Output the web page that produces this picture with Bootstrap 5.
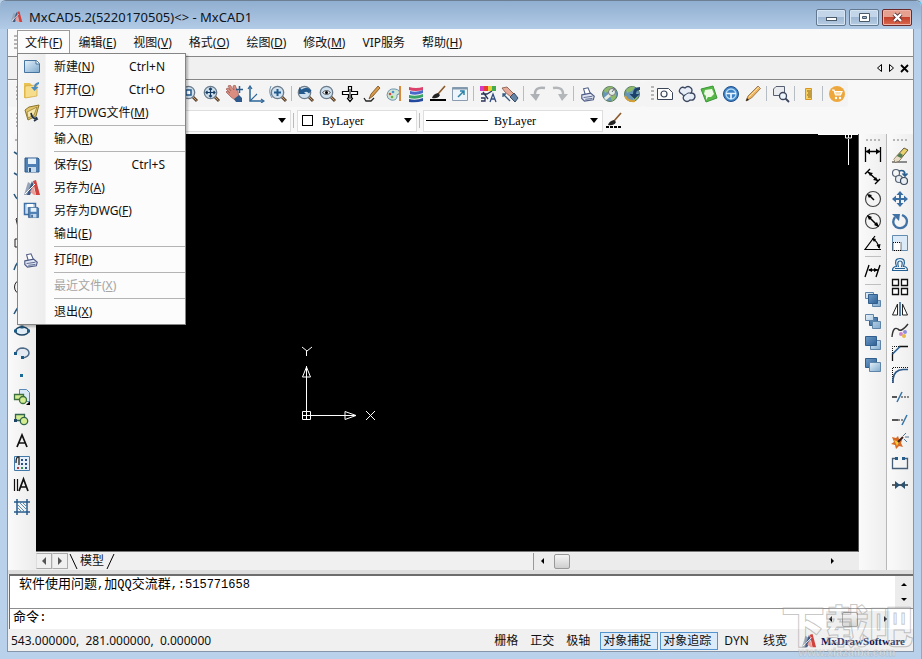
<!DOCTYPE html>
<html lang="zh-CN">
<head>
<meta charset="utf-8">
<meta name="viewport" content="width=device-width, initial-scale=1">
<title>MxCAD5.2</title>
<link href="https://cdn.jsdelivr.net/npm/bootstrap@5.3.0/dist/css/bootstrap.min.css" rel="stylesheet">
<style>
body{font-family:"Noto Sans","Noto Sans CJK SC",sans-serif;font-size:12px;line-height:16px;color:#111;background:#b9d1ea}
svg{display:block;flex:none}
button{color:inherit}
.window-frame{min-height:100vh;padding:0 7px 7px 7px;background:#b9d1ea;border-bottom:1px solid #2fd0ea;border-right:1px solid #4cc5ea;border-top:1px solid #6d7f93;border-radius:6px 6px 0 0}
.title-strip{height:28px;margin:0 -7px;padding:4px 9px 0 10px;background:linear-gradient(#90aed0,#b2cbe6);border-radius:6px 6px 0 0}
.title-text{font-size:13px;color:#0c1420;margin-left:6px}
.win-btns{gap:3px}
.win-btn{width:30px;height:17px;padding:0;border:1px solid #62788f;border-radius:2px;background:linear-gradient(#c3d5e8 45%,#9fb8d3 50%,#b6cce2);box-shadow:inset 0 0 0 1px #d7e4f1}
.win-close{background:linear-gradient(#e5a08f 45%,#c4412c 50%,#d9694f);border-color:#6a2a2a;box-shadow:inset 0 0 0 1px #eeb5a8}
.client-area{background:#f0f0f0;border:1px solid #8696a8;border-top:0}
.menu-strip{height:27px;background:#f9f9f9;padding-left:3px}
.grip-v{width:3px;height:15px;margin:0 4px 0 3px;background:repeating-linear-gradient(#b5b5b5 0 2px,transparent 2px 4px)}
.grip-h{width:42px;height:2px;margin:5px auto 3px;background:repeating-linear-gradient(90deg,#b5b5b5 0 2px,transparent 2px 4px)}
.grip-s{width:14px}
.menu-link{display:block;height:25px;padding:4px 9px 4px 8px;border:0;background:transparent;font-size:12px;line-height:16px}
.menu-open{padding:4px 7px;background:#fcfcfc;border:1px solid #9a9a9a;border-bottom:0}
.file-menu{width:169px;min-width:0;padding:1px 0;margin:0;border:1px solid #858585;border-radius:0;font-size:12px;color:#111;background:linear-gradient(90deg,#f7f7f7 0,#ededed 27px,#fcfcfc 28px);box-shadow:2px 2px 2px rgba(0,0,0,.25);top:23px;left:0}
.file-menu .menu-row{display:flex;align-items:center;width:100%;height:23px;padding:0 20px 0 5px;border:0;background:transparent;text-align:left}
.menu-row:disabled{color:#a5a5a5}
.row-icon{width:31px;flex:none}
.menu-rule{height:3px;margin:0 0 0 36px;padding:1px 0;background:#b4b4b4;background-clip:content-box;border:0;opacity:1}
.doc-strip{height:24px;background:#f0f0f0;border-top:1px solid #868686;border-bottom:1px solid #868686;padding-right:2px}
.flat-btn{border:0;background:transparent;padding:0;display:flex;align-items:center;justify-content:center}
.doc-btn{width:13px;height:20px}
.tool-deck{background:#f8f8f8}
.tool-row{height:27px}
.tool-set{height:26px;background:#f4f4f4;border-radius:3px}
.tool-btn{width:22px;height:22px;flex:none}
.tool-rule{width:1px;height:15px;margin:0 3px 0 2px;background:#b5bcc4;flex:none}
.side-rule{height:1px;width:16px;margin:2px auto 3px;background:#c0c0c0}
.under-menu{padding-left:156px}
.combo{height:22px;background:#fff;border:1px solid #dedede;flex:none}
.combo select{appearance:none;border:0;height:20px;width:100%;min-width:0;padding:0 6px 0 9px;font:12px/20px "Liberation Serif","Noto Sans CJK SC",serif;color:#000;background:transparent;outline:0}
.combo-line select{padding-left:6px}
.combo-arrow{width:0;border:4px solid transparent;border-top:5px solid #000;border-bottom:0;margin-right:4px;flex:none}
.combo-layer{width:268px}.combo-color{width:120px}.combo-line{width:180px}
.swatch{width:11px;height:11px;border:1px solid #000;margin-left:4px;flex:none}
.line-sample{width:62px;height:1px;background:#000;margin-left:2px;flex:none}
.work-area{flex:1 1 auto;min-height:436px}
.side-col{width:28px;background:linear-gradient(90deg,#fafafa,#ececec)}
.side-right{width:27px;background:linear-gradient(90deg,#fafafa,#eee)}
.side-right + .side-right{border-left:1px solid #b8b8b8}
.draw-canvas{background:#000;border-right:1px solid #555;border-bottom:1px solid #777}
.ucs-mark{position:absolute;left:264px;top:208px}
.cursor-mark{position:absolute;right:0;top:0}
.sheet-strip{height:18px;background:#f0f0f0}
.sheet-btn{width:16px;height:16px;border:1px solid #ababab;border-left-color:#ddd}
.sheet-room{flex:11 1 0}
.scroll-h{height:17px;background:#ececec}
.sheet-scroll{flex:8 1 0;border-left:1px solid #999;padding-right:22px}
.thumb{width:16px;height:15px;border:1px solid #999;border-radius:2px;background:linear-gradient(#f5f5f5,#cfcfcf)}
.split-bar{height:4px;background:#dedede}
.command-box{margin-left:1px;background:#fff;border-top:2px solid #6d6d6d;border-left:1px solid #6d6d6d;font:13px/18px "Liberation Mono","Noto Sans CJK SC",monospace;color:#000}
.log-row{height:33px;border-bottom:1px solid #8d8d8d}
.mono-small{font-size:12px}
.log-text{padding:0 0 0 9px}
.cmd-row{height:20px}
.cmd-row label{padding:0 0 2px 3px}
.cmd-row input{border:0;outline:0;background:transparent;min-width:0}
.cmd-scroll{margin-right:23px}
.scroll-v{width:18px;background:#ececec}
.status-strip{height:22px;padding:2px 0 0 3px}
.mode-btn{border:1px solid transparent;background:transparent;padding:0 5px;height:18px;line-height:14px;font-size:12px;flex:none}
.mode-on{border-color:#5595cf;background:#dcebf9;padding:0 6px 0 2px;margin-right:2px}
.mode-dyn{padding:0 3px}
.brand{font:bold 11px/16px "Liberation Serif",serif;color:#101850}
.site-stamp{position:absolute;right:9px;bottom:3px;width:132px;text-align:center;pointer-events:none;z-index:5}
.stamp-big{font:900 44px/48px "Noto Sans CJK SC",sans-serif;color:rgba(255,255,255,.2);-webkit-text-stroke:1px rgba(130,130,130,.45)}
.stamp-url{font:bold 11px/8px "Liberation Sans",sans-serif;color:rgba(255,255,255,.5);-webkit-text-stroke:1px rgba(130,130,130,.25)}
</style>
<script src="https://cdn.jsdelivr.net/npm/bootstrap@5.3.0/dist/js/bootstrap.bundle.min.js"></script>
</head>
<body>
<svg width="0" height="0" class="position-absolute" aria-hidden="true">
<defs>
<linearGradient id="bl" x1="0" y1="0" x2="1" y2="1"><stop offset="0" stop-color="#e4f1fa"/><stop offset="1" stop-color="#7fa9cd"/></linearGradient>
<linearGradient id="dk" x1="0" y1="0" x2="1" y2="1"><stop offset="0" stop-color="#6d9cc9"/><stop offset="1" stop-color="#2f5f93"/></linearGradient>
<symbol id="lens" viewBox="0 0 18 18"><path d="M11 11l5 5" stroke="#5c4632" stroke-width="3"/><path d="M12 12l3.500 3.500" stroke="#c79a6b" stroke-width="1"/><circle cx="7.500" cy="7.500" r="6.200" fill="#cfe0ee" stroke="#6b7b8b" stroke-width="1.300"/></symbol>
<symbol id="mlogo" viewBox="0 0 18 18"><path d="M1 16L5 3l3 2-3 11z" fill="#98a4b8"/><path d="M4 16L9 2l2 5-4 9z" fill="#3d5a85"/><path d="M10 2l3-1 4 15h-4z" fill="#d0423e"/><path d="M7 13l3-6 3 9h-2z" fill="#e9a09a"/><path d="M2 15L12 5" stroke="#fff" stroke-width="1"/></symbol>
<symbol id="disk" viewBox="0 0 18 18"><path d="M2 2h13l1 1v13H2z" fill="#4f80b5" stroke="#2f5b8c"/><path d="M5 2.500h8V8H5z" fill="#e6f1fa"/><path d="M5 11h8v5H5z" fill="#c5d9ea"/><path d="M6 12h2v4H6z" fill="#28517f"/></symbol>
<symbol id="printer" viewBox="0 0 18 18"><path d="M4 3l5-1 3 7-6 1z" fill="#fff" stroke="#4f5d86" stroke-width="1.200"/><path d="M2 10l10-2 4 3.500-1 4-10 1.500-3-3z" fill="#dfe4f2" stroke="#4f5d86" stroke-width="1.300"/><path d="M4 13l10-1.500M6 15l8-1" stroke="#4f5d86"/></symbol>
<symbol id="brush" viewBox="0 0 18 18"><path d="M9 9l7-8" stroke="#8b5a2b" stroke-width="1.600"/><path d="M3 13q1-4 6-5l2 2q-2 4-8 3z" fill="#222"/></symbol>
<symbol id="pencil" viewBox="0 0 18 18"><path d="M2 16l2-5L14 1l2.500 2.500-9 9.500z" fill="#edb45f" stroke="#8d6840" stroke-width=".8"/><path d="M2 16l1-3 2 2z" fill="#222"/><path d="M5 12l10-10" stroke="#fbe0a8"/></symbol>
<symbol id="globe" viewBox="0 0 18 18"><circle cx="9" cy="9" r="7.500" fill="#6797b8" stroke="#5b7a60"/><path d="M3 5q5-5 9-3l-3 4-5 2zM9 11l6-3q1 5-4 8z" fill="#8fba68"/></symbol>
</defs>
</svg>

<div class="window-frame d-flex flex-column">
<header class="title-strip d-flex align-items-center">
<svg width="13" height="14"><use href="#mlogo"/></svg>
<span class="title-text me-auto text-nowrap">MxCAD5.2(5220170505)&lt;&gt; - MxCAD1</span>
<div class="win-btns d-flex">
<button class="win-btn" aria-label="最小化"><svg width="28" height="15"><rect x="9.500" y="7.500" width="10" height="3" fill="#fff" stroke="#4b5a6b"/></svg></button>
<button class="win-btn" aria-label="还原"><svg width="28" height="15"><path d="M9.500 3.500h10v8h-10zM12.500 6.500h4v2h-4z" fill="#fff" fill-rule="evenodd" stroke="#4b5a6b"/></svg></button>
<button class="win-btn win-close" aria-label="关闭"><svg width="28" height="15"><path d="M11 4l7 7M18 4l-7 7" stroke="#5b3030" stroke-width="4"/><path d="M11 4l7 7M18 4l-7 7" stroke="#fff" stroke-width="2.400"/></svg></button>
</div>
</header>

<div class="client-area d-flex flex-column flex-grow-1">
<nav class="menu-strip d-flex align-items-center" aria-label="菜单">
<span class="grip-v me-0"></span>
<ul class="list-unstyled d-flex mb-0 text-nowrap">
<li class="dropdown position-relative"><button class="menu-link menu-open" aria-expanded="true">文件(<u>F</u>)</button>
<div class="dropdown-menu file-menu show">
<button class="menu-row"><span class="row-icon"><svg width="18" height="18"><path d="M1.500 2.500h12l3 3v9h-15z" fill="url(#bl)" stroke="#47749f"/><path d="M13 2.500V6h3.500" fill="#fff" stroke="#47749f"/></svg></span>新建(<u>N</u>)<span class="ms-auto">Ctrl+N</span></button>
<button class="menu-row"><span class="row-icon"><svg width="18" height="18"><path d="M1 2h6l2 2v12l-8 1z" fill="#e9c256"/><path d="M2 5l12-1v11l-12 2z" fill="#f6dd8b" stroke="#d1a43c" stroke-width=".7"/><path d="M16 1q-5 1-5 5H8l3.500 4 4-4H13q0-2 3-3z" fill="#4b8cc4"/></svg></span>打开(<u>O</u>)<span class="ms-auto">Ctrl+O</span></button>
<button class="menu-row"><span class="row-icon"><svg width="18" height="18"><path d="M2 6l4-3 10-2-3 11-8 4z" fill="#e2c56c" stroke="#8c7429"/><path d="M4 8l10-5-3 8-6 3z" fill="#f5e5ab" stroke="#8c7429" stroke-width=".7"/><path d="M8 9q1 6 6 6l-1-2M14 15l-3 2" fill="none" stroke="#233347" stroke-width="1.700"/></svg></span>打开DWG文件(<u>M</u>)</button>
<hr class="menu-rule">
<button class="menu-row"><span class="row-icon"></span>输入(<u>R</u>)</button>
<hr class="menu-rule">
<button class="menu-row"><span class="row-icon"><svg width="18" height="18"><use href="#disk"/></svg></span>保存(<u>S</u>)<span class="ms-auto">Ctrl+S</span></button>
<button class="menu-row"><span class="row-icon"><svg width="18" height="18"><use href="#mlogo"/></svg></span>另存为(<u>A</u>)</button>
<button class="menu-row"><span class="row-icon"><svg width="18" height="18"><path d="M1.500 1.500h11v11h-11z" fill="#c8ddef" stroke="#3e6fa6" stroke-width="1.500"/><path d="M4 2h6v3H4z" fill="#fff"/><use href="#disk" x="4" y="4" width="13" height="13"/></svg></span>另存为DWG(<u>F</u>)</button>
<button class="menu-row"><span class="row-icon"></span>输出(<u>E</u>)</button>
<hr class="menu-rule">
<button class="menu-row"><span class="row-icon"><svg width="16" height="16"><use href="#printer"/></svg></span>打印(<u>P</u>)</button>
<hr class="menu-rule">
<button class="menu-row" disabled><span class="row-icon"></span>最近文件(<u>X</u>)</button>
<hr class="menu-rule">
<button class="menu-row"><span class="row-icon"></span>退出(<u>X</u>)</button>
</div></li>
<li><button class="menu-link">编辑(<u>E</u>)</button></li>
<li><button class="menu-link">视图(<u>V</u>)</button></li>
<li><button class="menu-link">格式(<u>O</u>)</button></li>
<li><button class="menu-link">绘图(<u>D</u>)</button></li>
<li><button class="menu-link">修改(<u>M</u>)</button></li>
<li><button class="menu-link">VIP服务</button></li>
<li><button class="menu-link">帮助(<u>H</u>)</button></li>
</ul>
</nav>

<div class="doc-strip d-flex justify-content-end align-items-center">
<button class="flat-btn doc-btn" aria-label="上一个"><svg width="8" height="10"><path d="M6.500 1.500v7L2.500 5z" fill="none" stroke="#000"/></svg></button>
<button class="flat-btn doc-btn" aria-label="下一个"><svg width="8" height="10"><path d="M1.500 1.500v7L5.500 5z" fill="none" stroke="#000"/></svg></button>
<button class="flat-btn doc-btn" aria-label="关闭文档"><svg width="9" height="9"><path d="M1 1l7 7M8 1L1 8" stroke="#000" stroke-width="1.800"/></svg></button>
</div>

<div class="tool-deck">
<div class="tool-row d-flex align-items-center">
<div class="tool-set d-flex align-items-center ps-1">
<span class="grip-v ms-1"></span><span class="under-menu"></span>
<button class="flat-btn tool-btn" aria-label="窗口缩放"><svg width="18" height="18"><use href="#lens"/><path d="M5 5h5v5H5z" fill="#fff" stroke="#235a8c" stroke-width="1.500"/></svg></button>
<button class="flat-btn tool-btn" aria-label="范围缩放"><svg width="18" height="18"><use href="#lens"/><path d="M7.500 3v9M3 7.500h9M6 4.500l1.500-1.500L9 4.500M6 10.500l1.500 1.500L9 10.500M4.500 6L3 7.500 4.500 9M10.500 6L12 7.500 10.500 9" fill="none" stroke="#163c62" stroke-width="1.200"/></svg></button>
<button class="flat-btn tool-btn" aria-label="平移"><svg width="18" height="18"><path d="M1 4l2-1 3 3-3-5 2-1 4 5-1-4 2-1 3 7 1 5-4 3-4-3-5-5 1-1 3 2z" fill="#d98d80" stroke="#9b5c53" stroke-width=".7"/><path d="M9 14l5-4 3 3v4h-6z" fill="#2d5a8b"/><path d="M14.500 1v7M11 4.500h7" stroke="#2d5a8b" stroke-width="1.500"/></svg></button>
<button class="flat-btn tool-btn" aria-label="坐标系"><svg width="18" height="18"><path d="M3 2v14h13" fill="none" stroke="#2c6596" stroke-width="1.500"/><path d="M3 16l7-7M1 4l2-3 2 3M14 14l3 2-3 2" fill="none" stroke="#2c6596" stroke-width="1.200"/></svg></button>
<button class="flat-btn tool-btn" aria-label="实时缩放"><svg width="18" height="18"><use href="#lens" x="1"/><path d="M8.500 4v7M5 7.500h7" stroke="#235a8c" stroke-width="2"/><path d="M2 1q-3 6 1 12" fill="none" stroke="#6e8fae"/></svg></button>
<span class="tool-rule"></span>
<button class="flat-btn tool-btn" aria-label="缩放上一个"><svg width="18" height="18"><use href="#lens"/><path d="M2 9V2l2.500 2.500q6-4 10 1l-2.500 3q-2-3-5-1L9 9z" fill="#255a8c"/></svg></button>
<button class="flat-btn tool-btn" aria-label="查看"><svg width="18" height="18"><use href="#lens"/><path d="M3.500 7.500q4-4 8 0-4 4-8 0z" fill="#fff" stroke="#555"/><circle cx="7.500" cy="7.500" r="1.500"/></svg></button>
<button class="flat-btn tool-btn" aria-label="夹点"><svg width="18" height="18"><path d="M7.500 1.500h3v5h6v3h-6v3l1 1-2.500 3-2.500-3 1-1v-3h-6v-3h6z" fill="#fff" stroke="#000" stroke-width="1.200"/><path d="M9 4v10" stroke="#000"/></svg></button>
<button class="flat-btn tool-btn" aria-label="画笔"><svg width="18" height="18"><path d="M1 13l2 3h5l3-3" fill="none" stroke="#222" stroke-width="1.300"/><path d="M6 14l2-5 7-8 2 2-7 8z" fill="#d99a48" stroke="#744a1c" stroke-width=".8"/></svg></button>
<button class="flat-btn tool-btn" aria-label="调色板"><svg width="18" height="18"><path d="M2 10q1-7 8-6 6 1 4 5-3 0-2 3-1 4-6 3-4-1-4-5z" fill="#cfe5d5" stroke="#6f95ae"/><circle cx="5" cy="9" r="1.300" fill="#d34a3e"/><circle cx="8" cy="7" r="1.300" fill="#4a91cf"/><circle cx="7" cy="12" r="1.300" fill="#6bac3d"/><path d="M15 1v15" stroke="#d7893c" stroke-width="2"/></svg></button>
<button class="flat-btn tool-btn" aria-label="图层"><svg width="18" height="18"><path d="M2 2q7 2 14 0v3q-8 2-14 0z" fill="#da4069"/><path d="M3 6q6 2 13-1v3q-7 3-13 1z" fill="#4968ca"/><path d="M2 10q7 2 14-1v3q-7 3-14 1z" fill="#38a267"/><path d="M2 14q7 2 14-1v3q-7 2-14 1z" fill="#244a9d"/></svg></button>
<button class="flat-btn tool-btn" aria-label="线宽"><svg width="18" height="18"><use href="#brush"/><path d="M1 15h16" stroke="#000" stroke-width="2"/></svg></button>
<button class="flat-btn tool-btn" aria-label="全屏"><svg width="18" height="18"><path d="M1.500 2.500h15v13h-15z" fill="#edf5fb" stroke="#8a9db0"/><path d="M1.500 3.500h15" stroke="#7f97ad" stroke-width="2"/><path d="M7 12l6-6M9 6h4v4" fill="none" stroke="#2d82a8" stroke-width="1.500"/></svg></button>
<span class="tool-rule"></span>
<button class="flat-btn tool-btn" aria-label="文字样式"><svg width="18" height="18"><path d="M1 1h4v5H1z" fill="#d43ec4"/><path d="M5 1h4v5H5z" fill="#eb3b35"/><path d="M9 1h4v5H9z" fill="#e8cc38"/><path d="M13 1h4v5h-4z" fill="#43ab4f"/><path d="M2 9h6l5-3M4 7l5 7M2 13h4v3H2" fill="none" stroke="#2a3455" stroke-width="1.300"/><path d="M11 17l3-8 3 8M12 14h4" fill="none" stroke="#2f4a80" stroke-width="1.300"/></svg></button>
<button class="flat-btn tool-btn" aria-label="特性匹配"><svg width="18" height="18"><path d="M1 3l5-1 7 7-3 3-6-5z" fill="#e6aa9a" stroke="#805448" stroke-width=".8"/><path d="M9 12l4-4 4 5-3 4z" fill="#6684a5" stroke="#364a63"/><path d="M2 9l7 7M2 12V9h3" fill="none" stroke="#345980" stroke-width="1.300"/></svg></button>
<span class="tool-rule"></span>
<button class="flat-btn tool-btn" aria-label="撤销"><svg width="18" height="18"><path d="M16 3Q5 1 6 11" fill="none" stroke="#aeb1b5" stroke-width="2.500"/><path d="M1 9h10l-4 7z" fill="#aeb1b5"/></svg></button>
<button class="flat-btn tool-btn" aria-label="重做"><svg width="18" height="18"><path d="M2 3q11-2 10 8" fill="none" stroke="#b4b7ba" stroke-width="2.500"/><path d="M7 9h10l-6 7z" fill="#b4b7ba"/></svg></button>
<span class="tool-rule"></span>
<button class="flat-btn tool-btn" aria-label="打印"><svg width="16" height="16"><use href="#printer"/></svg></button>
<button class="flat-btn tool-btn" aria-label="网络查找"><svg width="18" height="18"><use href="#globe"/><path d="M4 14l7-6" stroke="#e8ebe4" stroke-width="3"/><circle cx="11" cy="7" r="3.500" fill="#e4eee8" stroke="#777"/><path d="M11 7l3-4" stroke="#667"/></svg></button>
<button class="flat-btn tool-btn" aria-label="网络更新"><svg width="18" height="18"><use href="#globe"/><path d="M17 2q-7 0-7 7H6.500l5 5 5-5H13q0-4 4-4z" fill="#1d416b"/><path d="M2 11q3 6 10 5" fill="none" stroke="#d6a035" stroke-width="2"/></svg></button>
</div>
<div class="tool-set d-flex align-items-center">
<span class="grip-v ms-2 me-0"></span>
<button class="flat-btn tool-btn" aria-label="区域"><svg width="18" height="18"><path d="M1.500 3.500h11l4 4v7h-15z" fill="#fff" stroke="#3b4658"/><circle cx="8" cy="9" r="3" fill="#fff" stroke="#3b4658" stroke-width="1.200"/></svg></button>
<button class="flat-btn tool-btn" aria-label="云线"><svg width="18" height="18"><path d="M4 9q-4-2-2-5 2-3 5-1 3-3 6 0 2 2 0 5 4 0 4 4-1 4-5 3-3 3-6 0-2-3 1-5-2 1-3-1z" fill="#e8eef7" stroke="#39465e" stroke-width="1.300"/><path d="M7 10q3-3 6-2" fill="none" stroke="#39465e"/></svg></button>
<button class="flat-btn tool-btn" aria-label="面积"><svg width="18" height="18"><path d="M1 4l12-3 4 12-11 4z" fill="#57b847" stroke="#3a9738"/><path d="M5 5l7-1 2 5-3 3H8l-2 3v-4L4 9z" fill="#eefae6"/></svg></button>
<button class="flat-btn tool-btn" aria-label="导航"><svg width="18" height="18"><circle cx="9" cy="9" r="7.500" fill="#3e82c4" stroke="#1f4f8b"/><circle cx="9" cy="9" r="5" fill="none" stroke="#b4dcf8" stroke-width="1.300"/><path d="M4 8.500h10M9 9v5" stroke="#eaf6ff" stroke-width="1.700"/></svg></button>
<button class="flat-btn tool-btn" aria-label="铅笔"><svg width="18" height="18"><use href="#pencil"/></svg></button>
<span class="tool-rule"></span>
<button class="flat-btn tool-btn" aria-label="查找"><svg width="18" height="18"><path d="M4 1.500h8.500v9H1.500V4z" fill="#e9ebef" stroke="#566072"/><circle cx="11" cy="11" r="3.500" fill="#edf5fb" stroke="#39465e" stroke-width="1.300"/><path d="M13.500 13.500l3.500 3.500" stroke="#39465e" stroke-width="1.800"/></svg></button>
<span class="tool-rule"></span>
<button class="flat-btn tool-btn" aria-label="标尺"><svg width="18" height="18"><path d="M5.500 3.500h6v11h-6z" fill="#f7d064" stroke="#d9961f"/><path d="M7 6h4M8 8h3M7 10h4M8 12h3" stroke="#8f6413"/></svg></button>
<span class="tool-rule"></span>
<button class="flat-btn tool-btn" aria-label="购买"><svg width="18" height="18"><circle cx="9" cy="9" r="8" fill="#eda73d"/><path d="M4 5h2l1.500 5h5L14 6.500H7" fill="#f8dda8" stroke="#fff" stroke-width="1.200"/><circle cx="8" cy="13" r="1.200" fill="#fff"/><circle cx="12" cy="13" r="1.200" fill="#fff"/></svg></button>
</div>
</div>
<div class="tool-row d-flex align-items-center ps-1">
<span class="grip-v ms-1"></span>
<div class="combo combo-layer d-flex align-items-center"><select aria-label="图层"></select><span class="combo-arrow"></span></div>
<span class="tool-rule"></span>
<div class="combo combo-color d-flex align-items-center"><span class="swatch"></span><select aria-label="颜色"><option>ByLayer</option></select><span class="combo-arrow"></span></div>
<span class="tool-rule"></span>
<div class="combo combo-line d-flex align-items-center"><span class="line-sample"></span><select aria-label="线型"><option>ByLayer</option></select><span class="combo-arrow"></span></div>
<button class="flat-btn tool-btn" aria-label="线型设置"><svg width="18" height="18"><use href="#brush"/><path d="M1 15h16" stroke="#000" stroke-width="2" stroke-dasharray="3 1"/></svg></button>
</div>
</div>

<main class="work-area d-flex">
<div class="side-col">
<div class="grip-h grip-s"></div>
<div class="d-flex flex-column align-items-center">
<button class="flat-btn tool-btn" aria-label="直线"><svg width="18" height="18"><path d="M1 6l14 9" stroke="#29567b" stroke-width="1.500"/></svg></button>
<button class="flat-btn tool-btn" aria-label="构造线"><svg width="18" height="18"><path d="M1 5l15 9" stroke="#29567b" stroke-width="1.500"/></svg></button>
<button class="flat-btn tool-btn" aria-label="多段线"><svg width="18" height="18"><path d="M1 4q3 8 15 10" fill="none" stroke="#29567b" stroke-width="1.500"/></svg></button>
<button class="flat-btn tool-btn" aria-label="多边形"><svg width="18" height="18"><path d="M9 2l6 5-2 8H5L3 7z" fill="none" stroke="#222"/></svg></button>
<button class="flat-btn tool-btn" aria-label="矩形"><svg width="18" height="18"><path d="M2 5h13v8H2z" fill="none" stroke="#222"/></svg></button>
<button class="flat-btn tool-btn" aria-label="圆弧"><svg width="18" height="18"><path d="M1 14Q4 2 16 4" fill="none" stroke="#29567b" stroke-width="1.500"/></svg></button>
<button class="flat-btn tool-btn" aria-label="圆"><svg width="18" height="18"><circle cx="9" cy="9" r="7.500" fill="none" stroke="#222"/></svg></button>
<button class="flat-btn tool-btn" aria-label="样条"><svg width="18" height="18"><path d="M1 14q7-14 15-8" fill="none" stroke="#29567b" stroke-width="1.500"/></svg></button>
<button class="flat-btn tool-btn" aria-label="椭圆"><svg width="18" height="18"><ellipse cx="9" cy="9" rx="6.500" ry="4" fill="#e0edf7" stroke="#1c4464" stroke-width="1.400"/><path d="M1 7.500h3v3H1zM14 7.500h3v3h-3zM7.500 3.500h3v3h-3z" fill="#1c5b85"/></svg></button>
<button class="flat-btn tool-btn" aria-label="椭圆弧"><svg width="18" height="18"><path d="M3 9q1-5 7-5 6 1 6 5 0 4-7 5" fill="#e5e9f2" stroke="#4d6b89" stroke-width="1.500"/><path d="M1 8h3v3H1zM8 12h3v3H8z" fill="#1c5b85"/></svg></button>
<button class="flat-btn tool-btn" aria-label="点"><svg width="18" height="18"><path d="M7 8h3v3H7z" fill="#1c6b94"/></svg></button>
<button class="flat-btn tool-btn" aria-label="插入块"><svg width="18" height="18"><path d="M6.500 1.500h7l3 3v9h-10z" fill="#dae9f6" stroke="#5a89b5"/><path d="M1.500 6.500h9v5h-9z" fill="#d4ec92" stroke="#3c703d" stroke-width="1.300"/><circle cx="10" cy="12" r="3.500" fill="#d4ec92" stroke="#3c703d" stroke-width="1.300"/><path d="M17 13v4h-4z"/></svg></button>
<button class="flat-btn tool-btn" aria-label="创建块"><svg width="18" height="18"><path d="M2.500 4.500h9v6h-9z" fill="#d4ec92" stroke="#31654d" stroke-width="1.300"/><circle cx="11" cy="11" r="3.700" fill="#d4ec92" stroke="#31654d" stroke-width="1.300"/><path d="M1 9h3v3H1z" fill="#1c4464"/></svg></button>
<button class="flat-btn tool-btn" aria-label="单行文字"><svg width="18" height="18"><path d="M4 15L9 3l5 12M5.500 11h7" fill="none" stroke="#111" stroke-width="1.700"/></svg></button>
<button class="flat-btn tool-btn" aria-label="表格"><svg width="18" height="18"><path d="M1.500 2.500h15v14h-15z" fill="#e7f0f8" stroke="#4379a9"/><path d="M3 9q0-7 3-6v8" fill="none" stroke="#222" stroke-width="1.300"/><path d="M8 5h2v2H8zM12 5h2v2h-2zM8 9h2v2H8zM12 9h2v2h-2zM12 13h2v2h-2z" fill="#2a4f85"/><path d="M4 13h2v2H4z" fill="#b43d46"/><path d="M8 13h2v2H8z" fill="#36934a"/></svg></button>
<button class="flat-btn tool-btn" aria-label="多行文字"><svg width="18" height="18"><path d="M1.500 3v12M4.500 3v12" stroke="#111" stroke-width="1.200"/><path d="M6 15l4.500-12L15 15M7.500 11h6" fill="none" stroke="#111" stroke-width="1.700"/></svg></button>
<button class="flat-btn tool-btn" aria-label="填充"><svg width="18" height="18"><path d="M1 4h16M1 14h16M4 1v16M14 1v16" stroke="#275a8b" stroke-width="1.500"/><path d="M5 7l7 7M5 10l4 4M6 4l8 8M9 4l5 5" stroke="#5b8fb8"/></svg></button>
</div>
</div>

<div class="d-flex flex-column flex-grow-1">
<div class="draw-canvas position-relative flex-grow-1">
<svg class="ucs-mark" width="80" height="80"><g fill="none" stroke="#fff"><path d="M2.500 69.500h8v8h-8zM6.500 77V24M2.500 73.500h51M6.500 25l-4 10h8zM6.500 28v7M56 73.500l-11-4v8zM45 73.500h11"/><path d="M2 5l5 4 5-4M6.500 9v5M66 69l9 9M75 69l-9 9"/></g></svg>
<svg class="cursor-mark" width="40" height="32"><path d="M0 .500h40M30.500 5v26M27.500 1v3h3V1M30.500 4h3V1" fill="none" stroke="#fff"/></svg>
</div>
<div class="sheet-strip d-flex align-items-center">
<button class="flat-btn sheet-btn" aria-label="上一页"><svg width="8" height="8"><path d="M6 0v8L2 4z" fill="#555"/></svg></button>
<button class="flat-btn sheet-btn" aria-label="下一页"><svg width="8" height="8"><path d="M2 0v8l4-4z" fill="#555"/></svg></button>
<svg width="12" height="16"><path d="M2 1l7 15" stroke="#000"/></svg>
<button class="flat-btn">模型</button>
<svg width="12" height="16"><path d="M10 1L3 16" stroke="#000"/></svg>
<div class="sheet-room"></div>
<div class="scroll-h sheet-scroll d-flex align-items-center">
<svg class="ms-1" width="8" height="8"><path d="M6 1v6L3 4z"/></svg><span class="thumb ms-2"></span><svg class="ms-auto" width="8" height="8"><path d="M2 1v6l3-3z"/></svg>
</div>
</div>
</div>

<div class="side-right">
<div class="grip-h grip-s"></div>
<div class="d-flex flex-column align-items-center">
<button class="flat-btn tool-btn" aria-label="线性标注"><svg width="18" height="18"><path d="M1.500 1v15M16.500 1v15M2 5.500h14" stroke="#000" stroke-width="1.300"/><path d="M2 5.500l4-3v6zM16 5.500l-4-3v6z"/></svg></button>
<button class="flat-btn tool-btn" aria-label="对齐标注"><svg width="18" height="18"><path d="M1 6l5-5M11 16l5-5M4 4l10 9" stroke="#000" stroke-width="1.400"/><path d="M4 4l5 1-3 3zM14 13l-5-1 3-3z"/></svg></button>
<button class="flat-btn tool-btn" aria-label="半径标注"><svg width="18" height="18"><circle cx="9" cy="9" r="7.500" fill="#f4f4f4" stroke="#444" stroke-width="1.200"/><path d="M5 5l5 5" stroke="#000" stroke-width="1.500"/><path d="M3 4l5 1-3 3z"/></svg></button>
<button class="flat-btn tool-btn" aria-label="直径标注"><svg width="18" height="18"><circle cx="9" cy="9" r="7.500" fill="#f4f4f4" stroke="#444" stroke-width="1.200"/><path d="M4 4l10 10" stroke="#000" stroke-width="1.500"/><path d="M3 3l5 2-3 3zM15 15l-5-2 3-3z"/></svg></button>
<button class="flat-btn tool-btn" aria-label="角度标注"><svg width="18" height="18"><path d="M17 15.500H1L11 2M9 5q5 3 6 9" fill="none" stroke="#000" stroke-width="1.200"/><path d="M8 4l4 1-2 3zM15.500 15l-3-4 4-1z"/></svg></button>
<div class="side-rule"></div>
<button class="flat-btn tool-btn" aria-label="坐标标注"><svg width="18" height="18"><path d="M1 15L5 3M12 15l4-12M5 8h9" stroke="#000" stroke-width="1.300"/><path d="M4 8l4-2v4zM14 8l-4-2v4z"/></svg></button>
<div class="side-rule"></div>
<button class="flat-btn tool-btn" aria-label="置于最前"><svg width="18" height="18"><path d="M1.500 2.500h8v6h-8zM8.500 10.500h8v6h-8z" fill="url(#bl)" stroke="#5e84a8"/><path d="M4.500 4.500h9v9h-9z" fill="url(#dk)" stroke="#315e8d"/></svg></button>
<button class="flat-btn tool-btn" aria-label="置于最后"><svg width="18" height="18"><path d="M5.500 5.500h8v8h-8z" fill="url(#dk)" stroke="#315e8d"/><path d="M1.500 2.500h8v6h-8zM8.500 9.500h8v7h-8z" fill="url(#bl)" stroke="#5e84a8"/></svg></button>
<button class="flat-btn tool-btn" aria-label="上移一层"><svg width="18" height="18"><path d="M6.500 6.500h10v9h-10z" fill="url(#bl)" stroke="#5e84a8"/><path d="M1.500 2.500h11v9h-11z" fill="url(#dk)" stroke="#315e8d"/></svg></button>
<button class="flat-btn tool-btn" aria-label="下移一层"><svg width="18" height="18"><path d="M1.500 2.500h11v9h-11z" fill="url(#dk)" stroke="#315e8d"/><path d="M5.500 6.500h11v9h-11z" fill="url(#bl)" stroke="#5e84a8"/></svg></button>
</div>
</div>
<div class="side-right">
<div class="grip-h grip-s"></div>
<div class="d-flex flex-column align-items-center">
<button class="flat-btn tool-btn" aria-label="删除"><svg width="18" height="18"><path d="M1 16h15" stroke="#222"/><path d="M3 13l10-11 4 2-9 11-4 1z" fill="#e9d16b" stroke="#635b3c"/><path d="M3 13l3-3 4 2-2 3-4 1z" fill="#e8dcc8"/><path d="M6 10l3-3 3 2-2 3z" fill="#4f7d57"/></svg></button>
<button class="flat-btn tool-btn" aria-label="复制"><svg width="18" height="18"><circle cx="5" cy="5" r="3.500" fill="none" stroke="#556374" stroke-width="1.200"/><circle cx="8" cy="11" r="3.500" fill="#e9eef3" stroke="#556374" stroke-width="1.200"/><circle cx="13" cy="13" r="3.500" fill="#e9eef3" stroke="#39495b" stroke-width="1.200"/><path d="M8 3q6-2 6 4M11.500 5.500L14 8l2.500-2.500" fill="none" stroke="#29608f" stroke-width="1.700"/></svg></button>
<button class="flat-btn tool-btn" aria-label="移动"><svg width="18" height="18"><path d="M9 3v12M3 9h12" stroke="#3a6ea3" stroke-width="2"/><path d="M9 1l3.500 4h-7zM9 17l3.500-4h-7zM1 9l4-3.500v7zM17 9l-4-3.500v7z" fill="#3a6ea3"/></svg></button>
<button class="flat-btn tool-btn" aria-label="旋转"><svg width="18" height="18"><path d="M4 5q-4 6 1 10 6 3 10-2 3-7-4-10" fill="none" stroke="#4272a5" stroke-width="2.300"/><path d="M1 2h8L8 9z" fill="#4272a5"/></svg></button>
<button class="flat-btn tool-btn" aria-label="缩放"><svg width="18" height="18"><path d="M1.500 1.500h15v15h-15z" fill="#dbeaf6" stroke="#628bb0"/><path d="M2 8.500h8v8H2z" fill="#fff" stroke="#000" stroke-dasharray="1 1"/></svg></button>
<button class="flat-btn tool-btn" aria-label="偏移"><svg width="18" height="18"><path d="M1.500 14.500h15q0-4-4-4 3-8-3.500-8t-3.500 8q-4 0-4 4zM4 12.500h10M7.500 11q-2-6 1.500-6t1.500 6" fill="#eaf4fb" stroke="#235f91" stroke-width="1.200"/></svg></button>
<button class="flat-btn tool-btn" aria-label="阵列"><svg width="18" height="18"><path d="M1.500 1.500h6v6h-6zM10.500 1.500h6v6h-6zM1.500 10.500h6v6h-6zM10.500 10.500h6v6h-6z" fill="#fff" stroke="#111" stroke-width="1.300"/></svg></button>
<button class="flat-btn tool-btn" aria-label="镜像"><svg width="18" height="18"><path d="M9 2v14" stroke="#2b5b8f" stroke-width="1.500"/><path d="M6.500 4v11H1.500zM11.500 4v11h5z" fill="#fff" stroke="#222"/></svg></button>
<button class="flat-btn tool-btn" aria-label="修改样条"><svg width="18" height="18"><path d="M1 15q1-11 6-8 3 4 10-5" fill="none" stroke="#333" stroke-width="1.400"/><circle cx="10" cy="12" r="2" fill="#cf83ca"/><circle cx="14" cy="10" r="2" fill="#8d8edb"/><circle cx="13" cy="14" r="2" fill="#e7b94b"/></svg></button>
<button class="flat-btn tool-btn" aria-label="倒角"><svg width="18" height="18"><path d="M8 2.500h9M1.500 9v8" stroke="#111" stroke-width="1.300"/><path d="M1.500 9V2.500H8" fill="none" stroke="#111" stroke-dasharray="1 1"/><path d="M1.500 10L9 2.500" stroke="#2b6294" stroke-width="1.700"/></svg></button>
<button class="flat-btn tool-btn" aria-label="圆角"><svg width="18" height="18"><path d="M1.500 17V1.500H17" fill="none" stroke="#111" stroke-dasharray="1 1"/><path d="M2 17V13Q3 4 12 3.500h5" fill="none" stroke="#2b5789" stroke-width="1.700"/></svg></button>
<button class="flat-btn tool-btn" aria-label="修剪"><svg width="18" height="18"><path d="M1 9h5" stroke="#222" stroke-width="1.500"/><path d="M6 14l5-10" stroke="#3775a8" stroke-width="1.500"/><path d="M10 9h8" stroke="#222" stroke-dasharray="2 1"/></svg></button>
<button class="flat-btn tool-btn" aria-label="延伸"><svg width="18" height="18"><path d="M1 10h6" stroke="#222" stroke-width="1.500"/><path d="M7 10h5" stroke="#222" stroke-dasharray="2 1"/><path d="M11 15l5-10" stroke="#3775a8" stroke-width="1.500"/></svg></button>
<button class="flat-btn tool-btn" aria-label="分解"><svg width="18" height="18"><path d="M1 5l4 1 2-2 1 3 3 1-1 3 2 4-4-1-3 3-1-4-4-1 3-2z" fill="#d96a24"/><path d="M3 8l5 2-2 4z" fill="#f5ca3d"/><path d="M7 10l5-5" stroke="#40211b" stroke-width="2"/><path d="M12 4l3-3M14 5h4M13 7l3 3" stroke="#4d7799"/></svg></button>
<button class="flat-btn tool-btn" aria-label="打断"><svg width="18" height="18"><path d="M4 4.500H1.500v10h15v-10H14" fill="none" stroke="#465d77" stroke-width="1.300"/><path d="M4 3h3v3H4zM11 3h3v3h-3z" fill="#255d8d"/></svg></button>
<button class="flat-btn tool-btn" aria-label="合并"><svg width="18" height="18"><path d="M1 9h16" stroke="#111" stroke-width="1.300"/><path d="M4 5l5 4-5 4zM14 5l-5 4 5 4z" fill="#2b5270"/></svg></button>
</div>
</div>
</main>

<div class="split-bar"></div>
<section class="command-box" aria-label="命令行">
<div class="log-row d-flex"><div class="log-text flex-grow-1">软件使用问题<span class="mono-small">,</span>加<span class="mono-small">QQ</span>交流群<span class="mono-small">,:515771658</span></div>
<div class="scroll-v d-flex flex-column justify-content-between align-items-center py-1"><svg width="8" height="8"><path d="M1 6h6L4 3z"/></svg><svg width="8" height="8"><path d="M1 2h6L4 5z"/></svg></div></div>
<div class="cmd-row d-flex align-items-center"><label for="cmd">命令:</label><input id="cmd" class="flex-grow-1" type="text">
<div class="scroll-h cmd-scroll d-flex align-items-center"><svg width="8" height="8"><path d="M6 1v6L3 4z"/></svg><span class="thumb ms-2"></span><svg class="ms-4" width="8" height="8"><path d="M2 1v6l3-3z"/></svg></div></div>
</section>

<footer class="status-strip d-flex align-items-center text-nowrap">
<span class="me-auto">543.000000,&nbsp; 281.000000,&nbsp; 0.000000</span>
<button class="mode-btn">栅格</button><button class="mode-btn">正交</button><button class="mode-btn me-1">极轴</button><button class="mode-btn mode-on" aria-pressed="true">对象捕捉</button><button class="mode-btn mode-on" aria-pressed="true">对象追踪</button><button class="mode-btn mode-dyn me-1">DYN</button><button class="mode-btn me-2">线宽</button>
<svg class="me-1" width="16" height="16"><use href="#mlogo"/></svg><span class="brand me-2">MxDrawSoftware</span>
</footer>
</div>
</div>
<div class="site-stamp" aria-hidden="true"><div class="stamp-big">下载吧</div><div class="stamp-url">www.xiazaiba.com</div></div>
</body>
</html>
